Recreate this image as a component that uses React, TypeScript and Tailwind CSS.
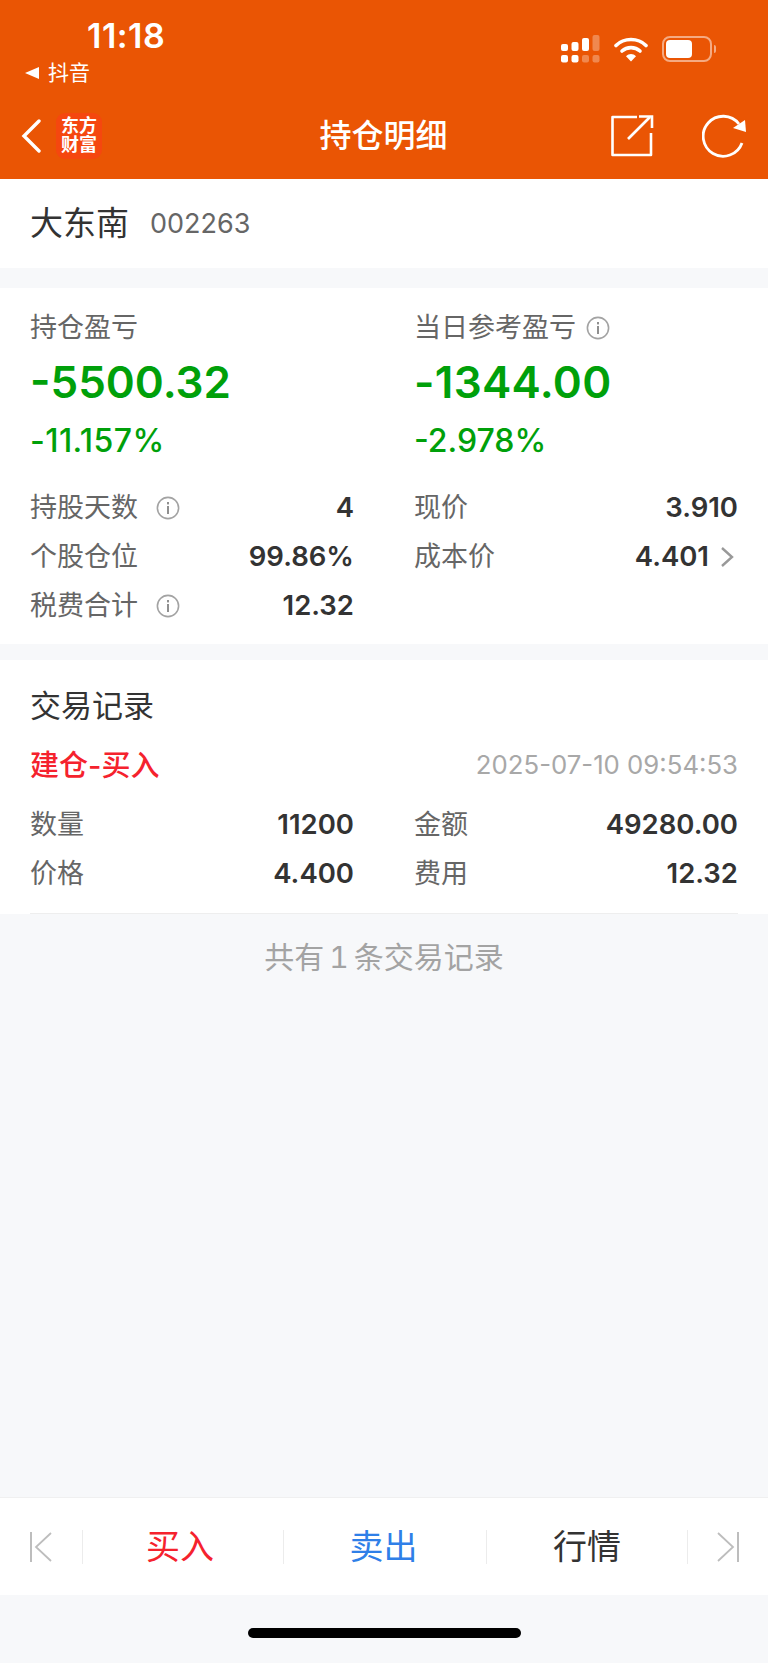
import React from "react";

const fontCls = "font-['Inter','Noto_Sans_CJK_SC',sans-serif]";

function InfoIcon() {
  return (
    <svg width="24" height="24" viewBox="0 0 24 24" fill="none" className="shrink-0">
      <circle cx="12" cy="12" r="10.6" stroke="#a3a3a3" strokeWidth="1.6" />
      <rect x="11" y="10" width="2" height="8" fill="#8f8f8f" />
      <rect x="11" y="6" width="2" height="2.4" fill="#8f8f8f" />
    </svg>
  );
}

function SignalIcon() {
  const bars = [
    { x: 0, h: 7, o: 1, o2: 1 },
    { x: 10.5, h: 9, o: 1, o2: 1 },
    { x: 21, h: 13, o: 1, o2: 0.3 },
    { x: 31.5, h: 16, o: 0.3, o2: 0.3 },
  ];
  return (
    <svg width="39" height="28" viewBox="0 0 39 28" className="block">
      {bars.map((b) => (
        <g key={b.x} fill="#fff">
          <rect x={b.x} y={16 - b.h} width="7" height={b.h} rx="2" opacity={b.o} />
          <rect x={b.x} y="20" width="7" height="7.5" rx="2" opacity={b.o2} />
        </g>
      ))}
    </svg>
  );
}

function WifiIcon() {
  return (
    <svg width="34" height="26" viewBox="0 0 34 26" fill="none" className="block">
      <path d="M2 9.5C10 1.5 24 1.5 32 9.5" stroke="#fff" strokeWidth="3.6" strokeLinecap="round" />
      <path d="M8 15C13 10.5 21 10.5 26 15" stroke="#fff" strokeWidth="3.6" strokeLinecap="round" />
      <path d="M12 20.2C15 17.4 19 17.4 22 20.2L17 25.4Z" fill="#fff" />
    </svg>
  );
}

function BatteryIcon() {
  return (
    <div className="flex items-center gap-[2px]">
      <div className="w-[50px] h-[26px] rounded-[8px] border-2 border-white/50 p-[2px] flex">
        <div className="w-[26px] h-full rounded-[4px] bg-white" />
      </div>
      <div className="w-[2px] h-[8px] rounded-r-full bg-white/50" />
    </div>
  );
}

function Row({ label, value, info, chevron }: { label: string; value: string; info?: boolean; chevron?: boolean }) {
  return (
    <div className="h-[49px] flex items-center relative">
      <span className="text-[27px] text-[#666] leading-none">{label}</span>
      {info && (
        <span className="ml-[18px]">
          <InfoIcon />
        </span>
      )}
      <span className="ml-auto text-[27.5px] font-semibold text-[#333] leading-none">{value}</span>
      {chevron && (
        <svg width="14" height="22" viewBox="0 0 14 22" fill="none" className="absolute -right-[25px]">
          <path d="M2 2L12 11L2 20" stroke="#999" strokeWidth="2.4" />
        </svg>
      )}
    </div>
  );
}

export default function App() {
  return (
    <div className={`w-[768px] h-[1663px] bg-[#f7f8fa] flex flex-col overflow-hidden ${fontCls}`}>
      {/* status + nav */}
      <div className="h-[179px] bg-[#ea5504] text-white shrink-0 flex flex-col">
        <div className="h-[100px] flex justify-between pl-[25px] pr-[52px]">
          <div>
            <div className="pl-[62px] pt-[17px] text-[34px] tracking-[0.5px] font-semibold leading-[38px]">11:18</div>
            <div className="flex items-center gap-[9px] mt-[4px]">
              <span className="w-0 h-0 border-y-[6px] border-y-transparent border-r-[14px] border-r-white" />
              <span className="text-[21px] leading-[28px]">抖音</span>
            </div>
          </div>
          <div className="flex items-center gap-[14px] h-[100px] pb-[2px]">
            <SignalIcon />
            <WifiIcon />
            <BatteryIcon />
          </div>
        </div>
        <div className="flex-1 flex items-center pl-[21px] pr-[20px] pb-[7px]">
          <div className="flex-1 flex items-center">
            <svg width="20" height="34" viewBox="0 0 20 34" fill="none">
              <path d="M18 2L3 17L18 32" stroke="#fff" strokeWidth="3.4" strokeLinecap="round" />
            </svg>
            <div className="ml-[15px] w-[46px] h-[46px] rounded-[9px] bg-[#f5470f] flex flex-col items-center justify-center font-['Liberation_Serif','Noto_Sans_CJK_SC',serif] font-bold text-[18px] leading-[19px]">
              <span>东方</span>
              <span>财富</span>
            </div>
          </div>
          <div className="text-center text-[32px] font-medium leading-none pr-[2px]">持仓明细</div>
          <div className="flex-1 flex items-center justify-end">
            <svg width="44" height="44" viewBox="0 0 44 44" fill="none" className="mr-[48px]">
              <path d="M27 3H2.5V41H41V19" stroke="#fff" strokeWidth="2.6" strokeLinejoin="round" />
              <path d="M18 25L40 3" stroke="#fff" strokeWidth="2.6" />
              <path d="M29 2.5H42V14" stroke="#fff" strokeWidth="2.6" />
            </svg>
            <svg width="46" height="44" viewBox="0 0 46 44" fill="none">
              <path d="M40 29A20 20 0 1 1 37 10" stroke="#fff" strokeWidth="2.8" />
              <path d="M44 18L31 14L43 6Z" fill="#fff" />
            </svg>
          </div>
        </div>
      </div>

      {/* stock */}
      <div className="h-[89px] bg-white shrink-0 flex items-center pl-[30px] gap-[21px]">
        <span className="text-[33px] text-[#333] leading-none">大东南</span>
        <span className="text-[27px] text-[#666] leading-none">002263</span>
      </div>

      {/* pnl */}
      <div className="mt-[20px] h-[356px] bg-white shrink-0 pt-[22px] px-[30px]">
        <div className="grid grid-cols-2 gap-x-[60px]">
          <div>
            <div className="h-[36px] flex items-center text-[27px] text-[#666]">持仓盈亏</div>
            <div className="mt-[12px] h-[48px] flex items-center text-[44px] font-semibold text-[#00a00a] leading-none">-5500.32</div>
            <div className="mt-[18px] h-[34px] flex items-center text-[32px] tracking-[0.4px] font-medium text-[#00a00a] leading-none">-11.157%</div>
          </div>
          <div>
            <div className="h-[36px] flex items-center text-[27px] text-[#666] gap-[10px]">
              当日参考盈亏
              <InfoIcon />
            </div>
            <div className="mt-[12px] h-[48px] flex items-center text-[44px] tracking-[0.3px] font-semibold text-[#00a00a] leading-none">-1344.00</div>
            <div className="mt-[18px] h-[34px] flex items-center text-[32px] font-medium text-[#00a00a] leading-none">-2.978%</div>
          </div>
        </div>
        <div className="grid grid-cols-2 gap-x-[60px] mt-[25px]">
          <div>
            <Row label="持股天数" value="4" info />
            <Row label="个股仓位" value="99.86%" />
            <Row label="税费合计" value="12.32" info />
          </div>
          <div>
            <Row label="现价" value="3.910" />
            <div className="pr-[29px]">
              <Row label="成本价" value="4.401" chevron />
            </div>
          </div>
        </div>
      </div>

      {/* trades */}
      <div className="mt-[16px] h-[254px] bg-white shrink-0 px-[30px] pt-[25px]">
        <div className="h-[40px] flex items-center text-[31px] text-[#333] leading-none">交易记录</div>
        <div className="mt-[20px] h-[40px] flex items-center justify-between">
          <span className="text-[29px] font-medium text-[#f5222d] leading-none">建仓-买入</span>
          <span className="text-[25.75px] text-[#a8a8a8] leading-none">2025-07-10 09:54:53</span>
        </div>
        <div className="grid grid-cols-2 gap-x-[60px] mt-[15px]">
          <Row label="数量" value="11200" />
          <Row label="金额" value="49280.00" />
          <Row label="价格" value="4.400" />
          <Row label="费用" value="12.32" />
        </div>
      </div>
      <div className="mx-[30px] h-px bg-[#eeeeee] -mt-px shrink-0" />

      <div className="mt-[21px] text-center text-[30px] text-[#a3a3a3] leading-[44px]">
        共有<span className="mx-[5px] tabular-nums">1</span>条交易记录
      </div>

      {/* toolbar */}
      <div className="mt-auto h-[98px] bg-white border-t border-[#f0f0f0] shrink-0 flex items-center">
        <div className="w-[82px] flex justify-center">
          <svg width="22" height="32" viewBox="0 0 22 32" fill="none">
            <path d="M1 1V31" stroke="#bdbdbd" strokeWidth="2" />
            <path d="M21 2L6 16L21 30" stroke="#bdbdbd" strokeWidth="1.8" />
          </svg>
        </div>
        <div className="w-px h-[34px] bg-[#ececec]" />
        <div className="w-[200px] text-center text-[34px] text-[#f5222d] leading-none pr-[6px]">买入</div>
        <div className="w-px h-[34px] bg-[#ececec]" />
        <div className="w-[202px] text-center text-[34px] text-[#2f7fe8] leading-none pr-[3px]">卖出</div>
        <div className="w-px h-[34px] bg-[#ececec]" />
        <div className="w-[200px] text-center text-[34px] text-[#333] leading-none">行情</div>
        <div className="w-px h-[34px] bg-[#ececec]" />
        <div className="flex-1 flex justify-center">
          <svg width="22" height="32" viewBox="0 0 22 32" fill="none">
            <path d="M21 1V31" stroke="#bdbdbd" strokeWidth="2" />
            <path d="M1 2L16 16L1 30" stroke="#bdbdbd" strokeWidth="1.8" />
          </svg>
        </div>
      </div>
      <div className="h-[68px] shrink-0 flex items-center justify-center pt-[7px]">
        <div className="w-[273px] h-[10px] rounded-full bg-black" />
      </div>
    </div>
  );
}
